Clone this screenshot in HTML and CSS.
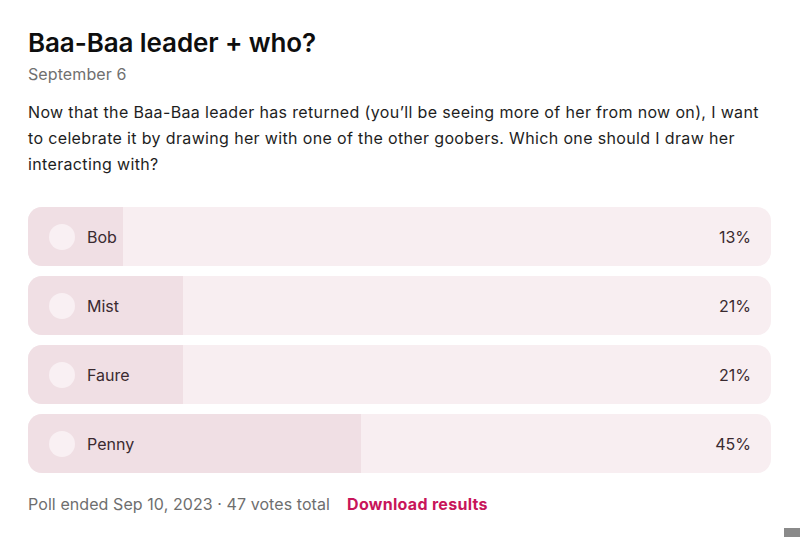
FILE: index.html
```html
<!DOCTYPE html>
<html>
<head>
<meta charset="utf-8">
<link rel="stylesheet" href="styles.css">
</head>
<body>
<div class="post">
  <h1 class="title">Baa-Baa leader + who?</h1>
  <div class="date">September 6</div>
  <p class="body">Now that the Baa-Baa leader has returned (you’ll be seeing more of her from now on), I want to celebrate it by drawing her with one of the other goobers. Which one should I draw her interacting with?</p>
  <div class="poll">
    <div class="option"><div class="fill" style="width:12.8%"></div><span class="radio"></span><span class="label">Bob</span><span class="pct">13%</span></div>
    <div class="option"><div class="fill" style="width:20.9%"></div><span class="radio"></span><span class="label">Mist</span><span class="pct">21%</span></div>
    <div class="option"><div class="fill" style="width:20.9%"></div><span class="radio"></span><span class="label">Faure</span><span class="pct">21%</span></div>
    <div class="option"><div class="fill" style="width:44.8%"></div><span class="radio"></span><span class="label">Penny</span><span class="pct">45%</span></div>
  </div>
  <div class="footer">
    <span class="meta">Poll ended Sep 10, 2023 · 47 votes total</span>
    <a class="download" href="#">Download results</a>
  </div>
</div>
<div class="corner"></div>
</body>
</html>
```
FILE: styles.css
```css
html, body {
  margin: 0;
  padding: 0;
  background: #ffffff;
}
body {
  font-family: Inter, "Noto Sans", sans-serif;
  color: #1f1a1c;
}
.post {
  padding: 26px 29px 0 28px;
}
.title {
  margin: 0;
  font-size: 26px;
  line-height: 34px;
  font-weight: 600;
  color: #0e0e0e;
  letter-spacing: -0.1px;
}
.date {
  margin-top: 4px;
  font-size: 16px;
  line-height: 20px;
  color: #707070;
  letter-spacing: 0.1px;
}
.body {
  margin: 15px 0 0 0;
  font-size: 16px;
  line-height: 26px;
  color: #1e1e1e;
  letter-spacing: 0.35px;
}
.poll {
  margin-top: 30px;
  display: flex;
  flex-direction: column;
  gap: 10px;
}
.option {
  position: relative;
  height: 59px;
  border-radius: 14px;
  background: #f8eef1;
  overflow: hidden;
  display: flex;
  align-items: center;
  padding: 0 20px 0 21px;
  font-size: 16px;
  color: #3a2a30;
}
.fill {
  position: absolute;
  left: 0;
  top: 0;
  bottom: 0;
  background: #f0dfe4;
}
.radio {
  position: relative;
  width: 26px;
  height: 26px;
  border-radius: 50%;
  background: #f9f0f3;
  flex: none;
}
.label {
  position: relative;
  margin-left: 12px;
  flex: 1;
}
.pct {
  position: relative;
}
.footer {
  margin-top: 21px;
  font-size: 16px;
  line-height: 20px;
  display: flex;
  gap: 17px;
}
.meta {
  color: #6e6e6e;
  letter-spacing: 0.08px;
}
.download {
  color: #c8155a;
  font-weight: 700;
  text-decoration: none;
  letter-spacing: 0.3px;
}
.corner {
  position: fixed;
  right: 0;
  bottom: 0;
  width: 16px;
  height: 9px;
  background: #8a8a8a;
}
```
